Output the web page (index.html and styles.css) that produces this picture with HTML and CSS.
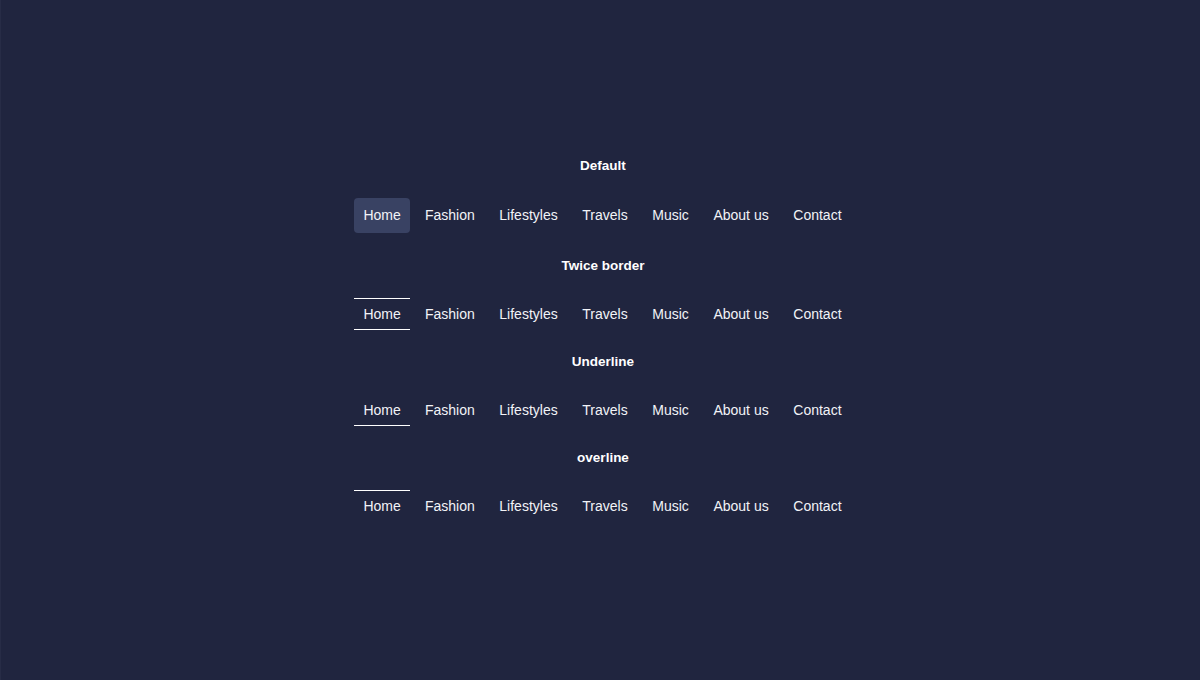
FILE: index.html
```html
<!DOCTYPE html>
<html lang="en">
<head>
<meta charset="utf-8">
<title>Nav styles</title>
<link rel="stylesheet" href="styles.css">
</head>
<body>
<div class="page">
  <h3 class="title">Default</h3>
  <ul class="nav nav-default">
    <li class="active">Home</li>
    <li>Fashion</li>
    <li>Lifestyles</li>
    <li>Travels</li>
    <li>Music</li>
    <li>About us</li>
    <li>Contact</li>
  </ul>

  <h3 class="title">Twice border</h3>
  <ul class="nav nav-twice">
    <li class="active">Home</li>
    <li>Fashion</li>
    <li>Lifestyles</li>
    <li>Travels</li>
    <li>Music</li>
    <li>About us</li>
    <li>Contact</li>
  </ul>

  <h3 class="title">Underline</h3>
  <ul class="nav nav-underline">
    <li class="active">Home</li>
    <li>Fashion</li>
    <li>Lifestyles</li>
    <li>Travels</li>
    <li>Music</li>
    <li>About us</li>
    <li>Contact</li>
  </ul>

  <h3 class="title">overline</h3>
  <ul class="nav nav-overline">
    <li class="active">Home</li>
    <li>Fashion</li>
    <li>Lifestyles</li>
    <li>Travels</li>
    <li>Music</li>
    <li>About us</li>
    <li>Contact</li>
  </ul>
</div>
</body>
</html>
```

FILE: styles.css
```css
html, body {
  margin: 0;
  padding: 0;
  height: 100%;
}

body {
  background: #20253f;
  border-left: 1px solid #272c46;
  box-sizing: border-box;
  font-family: "Liberation Sans", Arial, sans-serif;
  color: #f2f3f7;
}

.page {
  display: flex;
  flex-direction: column;
  align-items: center;
  gap: 22px;
  padding: 156px 0 0 5px;
}

.title {
  margin: 0;
  font-size: 13.5px;
  font-weight: bold;
  line-height: 20px;
  color: #ffffff;
}

.nav {
  display: flex;
  gap: 4.6px;
  margin: 0;
  padding: 0;
  list-style: none;
}

.nav li {
  font-size: 14px;
  padding: 0 10px;
  line-height: 30px;
  border-top: 1px solid transparent;
  border-bottom: 1px solid transparent;
  color: #f2f3f7;
}

.nav li.active {
  padding: 0 9.5px 0 9px;
}

.nav-default {
  margin: 0 0 1px;
}

.nav-default li {
  border: 0;
  line-height: 35px;
  border-radius: 4px;
}

.nav-default li.active {
  background: #394263;
}

.nav-twice li.active {
  border-top-color: #ffffff;
  border-bottom-color: #ffffff;
}

.nav-underline li.active {
  border-bottom-color: #ffffff;
}

.nav-overline li.active {
  border-top-color: #ffffff;
}
```
